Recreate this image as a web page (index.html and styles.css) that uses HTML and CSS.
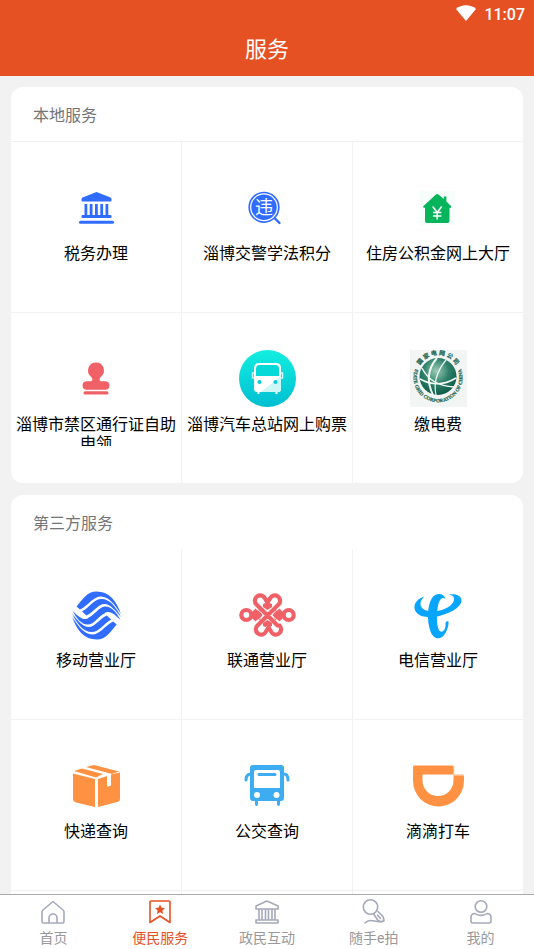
FILE: index.html
```html
<!DOCTYPE html>
<html lang="zh-CN">
<head>
<meta charset="utf-8">
<meta name="viewport" content="width=device-width, initial-scale=1">
<title>服务</title>
<link rel="stylesheet" href="styles.css">
</head>
<body>
<header class="top">
  <div class="status">
    <svg class="wifi" viewBox="0 0 20 16" aria-hidden="true"><path d="M0 4C5-1 15-1 20 4L10 16Z" fill="#fff"/></svg>
    <time>11:07</time>
  </div>
  <h1>服务</h1>
</header>

<main class="content">
  <section class="card">
    <h2 class="card-title ruled">本地服务</h2>
    <div class="grid">
      <a class="cell" href="#">
        <svg class="icon" viewBox="0 0 57 57" aria-hidden="true" fill="#306cff"><path d="M28.500 13 42.500 18.500q1 .5 1 2v1q0 1-1 1h-28q-1 0-1-1v-1q0-1.500 1-2Z"/><path d="M16.500 25h2.800v11h-2.800Zm5.200 0h2.800v11h-2.800Zm5.300 0h2.800v11H27Zm5.300 0h2.800v11h-2.800Zm5.200 0h2.800v11h-2.800Z"/><rect x="13.500" y="36" width="30" height="3" rx="1"/><rect x="11" y="41.800" width="35" height="3" rx="1.500"/></svg>
        <span class="label">税务办理</span>
      </a>
      <a class="cell" href="#">
        <svg class="icon" viewBox="0 0 57 57" aria-hidden="true"><circle cx="25" cy="28.300" r="14.800" fill="none" stroke="#306cff" stroke-width="1.700"/><circle cx="25" cy="28.300" r="12.700" fill="#306cff"/><path d="m36 39.500 4.500 4.500" stroke="#306cff" stroke-width="2.400" stroke-linecap="round"/><text class="seal" x="25" y="35" text-anchor="middle">违</text></svg>
        <span class="label">淄博交警学法积分</span>
      </a>
      <a class="cell" href="#">
        <svg class="icon" viewBox="0 0 57 57" aria-hidden="true"><path fill="#f7fdfa" d="M10 12h35v34H10z"/><path d="M25.900 15.500q1.300-1.200 2.600 0l5.300 4.500v-2.500h2.600v5L41 27q1 1.800-1 1.800h-.5V42q0 2-2 2H17q-2 0-2-2V28.800h-.5q-2 0-1-1.800Z" fill="#06b45c"/><path d="m22.700 27.500 4.500 6 4.500-6M27.200 33v7.500M23 33.500h8.400M23 37h8.400" fill="none" stroke="#fff" stroke-width="1.600"/></svg>
        <span class="label">住房公积金网上大厅</span>
      </a>
      <a class="cell" href="#">
        <svg class="icon" viewBox="0 0 57 57" aria-hidden="true" fill="#ef6067"><path d="M28 12.500a8 8 0 0 1 5 14.200c-2 1.800-2 4.600 1 4.600H37.800a4.300 4.300 0 0 1 0 8.500H18.200a4.300 4.300 0 0 1 0-8.500H22c3 0 3-2.800 1-4.600A8 8 0 0 1 28 12.500Z"/><rect x="15.500" y="41.200" width="25" height="3.300" rx="1.500"/></svg>
        <span class="label">淄博市禁区通行证自助申领</span>
      </a>
      <a class="cell" href="#">
        <svg class="icon" viewBox="0 0 57 57" aria-hidden="true"><defs><linearGradient id="teal" x2="0" y2="1"><stop stop-color="#13eee0"/><stop offset="1" stop-color="#00bed2"/></linearGradient></defs><circle cx="28.500" cy="28.500" r="28.500" fill="url(#teal)"/><path d="M15 23h-1.500v5H15m27-5h1.500v5H42" fill="none" stroke="#c9fbf8" stroke-width="1.500"/><path d="M20 13h17q5 0 5 5v21q0 3-3 3h-.5v2h-2v-2h-16v2h-2v-2H18q-3 0-3-3V18q0-5 5-5Z" fill="#fff"/><path d="M42 26v13q0 3-3 3H22Z" fill="#cdf6f6"/><path d="M20.500 15h16q3.500 0 3.500 4v7H17v-7q0-4 3.500-4Z" fill="#06d9d8"/><circle cx="20.500" cy="32" r="2" fill="#05cbd5"/><circle cx="36.500" cy="32" r="2" fill="#05cbd5"/></svg>
        <span class="label">淄博汽车总站网上购票</span>
      </a>
      <a class="cell" href="#">
        <svg class="icon" viewBox="0 0 57 57" aria-hidden="true"><defs><radialGradient id="globe" cx=".45" cy=".35" r=".7"><stop stop-color="#9bcbb8"/><stop offset=".5" stop-color="#2d8069"/><stop offset="1" stop-color="#075743"/></radialGradient><path id="arc-top" d="M9 17A21 21 0 0 1 47 17"/><path id="arc-bottom" d="M5.500 18A24.500 24.500 0 1 0 50.500 18"/></defs><path fill="#f3f4f4" d="M0 0h57v57H0z"/><circle cx="28" cy="26.500" r="18.500" fill="url(#globe)"/><g fill="none" stroke="#f3faf6"><path d="M10 29q18 10 36-1" stroke-width="1.500"/><path d="M12 18q9 18 32 19" stroke-width="1.400"/><path d="M27 8q-14 16-4 37" stroke-width="2"/><path d="M36 10Q22 27 26 45" stroke-width="1.200"/></g><text class="ring ring-cn"><textPath href="#arc-top" startOffset="50%" text-anchor="middle">国 家 电 网 公 司</textPath></text><text class="ring ring-en"><textPath href="#arc-bottom" startOffset="50%" text-anchor="middle">STATE GRID CORPORATION OF CHINA</textPath></text></svg>
        <span class="label">缴电费</span>
      </a>
    </div>
  </section>

  <section class="card">
    <h2 class="card-title">第三方服务</h2>
    <div class="grid">
      <a class="cell" href="#">
        <svg class="icon" viewBox="0 0 57 57" aria-hidden="true" fill="#306cff"><g id="waves"><path d="M8.500 20.500C15 13 19 5.500 28.500 5.500 41 5.500 48 14 53 28 47 19 41 10.500 33 10.500 25 10.500 21 19 12 23.500Z"/><path d="M14 25.500C22 21 26 13 33.500 13 42 13 48 21 53 31 47 24 42 18 36.500 18 30 18 26 26 18.500 29.500Z"/><path d="M20 32C27 29 31 20.500 37.500 20.500 44 20.500 49 27 52.500 34 47 28.500 43 25.500 39.500 26 34 27 31 32 25 35Z"/></g><use href="#waves" transform="rotate(180 28.600 29.500)"/></svg>
        <span class="label">移动营业厅</span>
      </a>
      <a class="cell" href="#">
        <svg class="icon" viewBox="0 0 57 57" aria-hidden="true"><g fill="none" stroke="#ef6067" stroke-width="4.200"><path d="M38.500 39.500 17.500 18.500a5.300 5.300 0 1 1 8.500-6l2.500 4 2.500-4a5.300 5.300 0 1 1 8.500 6l-21 21a5.300 5.300 0 1 0 8.500 6l2.500-4 2.500 4a5.300 5.300 0 1 0 8.500-6Z"/><circle cx="7.300" cy="29" r="5"/><circle cx="49.700" cy="29" r="5"/></g><path d="m24 18 2.500-1 2 1.500 2-1.500 2.500 1v3l-4.500 3-4.500-3Zm0 22 2.500 1 2-1.500 2 1.500 2.500-1v-3l-4.500-3-4.500 3ZM12 27l4.500-4.500 2 2 2-1 3 5.500-3 5.500-2-1-2 2L12 31Zm33 0-4.500-4.500-2 2-2-1-3 5.500 3 5.500 2-1 2 2L45 31Z" fill="#ef6067"/><path d="m17.500 22.500 6 5.500m-6 7.500 6-5.500m16-7.500-6 5.500m6 7.500-6-5.500" stroke="#fff" stroke-width=".8"/></svg>
        <span class="label">联通营业厅</span>
      </a>
      <a class="cell" href="#">
        <svg class="icon" viewBox="0 0 57 57" aria-hidden="true" fill="#08a5ff"><path d="M14 10.500C6 13 2 20 6 26c4 6 16 6 25 3.500C43 26 52 20 51.500 14 51 9 45 7.500 38.500 8.500c4 .5 6 2 5.500 5.500-1 6-11 11-20 11.500-7 .3-13-2-13.500-7-.2-3 1.500-5.500 3.500-8Z"/><path d="M35.500 13C34 7 26 6 22 12c-5 8-5 22-2 32 3 10 11 11 15.500 3 2-4 3.500-8 3-11.500-2-.5-3 .5-3 2 .5 5-2 9-5 8-4-2-4.500-18-2-28 1.500-5 4-7 7-4.500Z"/></svg>
        <span class="label">电信营业厅</span>
      </a>
      <a class="cell" href="#">
        <svg class="icon" viewBox="0 0 57 57" aria-hidden="true" fill="#ff9142"><path d="m6 14 8-2.500 21 5.500-7 3.500Z M18 10l8-2 25 6.500-7 2.500Z"/><path d="M5 16.500 27 22v28L8 45.500q-3-1-3-3Z M30 22l9-3v11l4-1.500V17.500l9-2V42q0 2-2 2.800L30 50Z"/></svg>
        <span class="label">快递查询</span>
      </a>
      <a class="cell" href="#">
        <svg class="icon" viewBox="0 0 57 57" aria-hidden="true" fill="#3eacf1"><path fill-rule="evenodd" d="M14 8h28q3 0 3 3v30q0 3-3 3h-1v3q0 2-1.500 2T38 47v-3H19v3q0 2-1.500 2T16 47v-3h-2q-3 0-3-3V11q0-3 3-3Zm3 5q-2 0-2 2v16h26V15q0-2-2-2Z"/><path d="M20 17.500h16" stroke="#3eacf1" stroke-width="3" stroke-linecap="round"/><path d="M12 17q-5 0-5 6m38-6q4 0 4 6" fill="none" stroke="#3eacf1" stroke-width="3" stroke-linecap="round"/><circle cx="18" cy="38" r="3" fill="#fff"/><circle cx="37.500" cy="38" r="3" fill="#fff"/></svg>
        <span class="label">公交查询</span>
      </a>
      <a class="cell" href="#">
        <svg class="icon" viewBox="0 0 57 57" aria-hidden="true"><path fill-rule="evenodd" d="M4 8.500h38q2 0 2 2v7h8q2 0 2 2v4a25.500 26 0 0 1-51 0v-13q0-2 1-2Zm8.500 9v6a15.500 15.500 0 0 0 31 0v-6Z" fill="#ff9142"/><path d="M44 8.500v9.500h10" fill="none" stroke="#ffe1cc"/></svg>
        <span class="label">滴滴打车</span>
      </a>
      <div class="cell"></div>
      <div class="cell"></div>
      <div class="cell"></div>
    </div>
  </section>
</main>

<nav class="tabs">
  <a class="tab" href="#"><svg viewBox="0 0 26 26" aria-hidden="true"><path d="M13 2.500 23 11q1 1 1 2v9.500q0 1.500-1.500 1.500h-19Q2 24 2 22.500V13q0-1 1-2ZM9 24v-5a4 4 0 0 1 8 0v5"/></svg><span>首页</span></a>
  <a class="tab active" href="#" aria-current="page"><svg viewBox="0 0 26 26" aria-hidden="true"><path d="M4 2h18q1 0 1 1v20.500L13 17 3 23.500V3q0-1 1-1Z"/><path class="solid" d="m13 5.500 1.500 3.200 3.500.4-2.600 2.400.7 3.500-3.100-1.800L9.900 15l.7-3.500L8 9.100l3.500-.4Z"/></svg><span>便民服务</span></a>
  <a class="tab" href="#"><svg viewBox="0 0 26 26" aria-hidden="true"><path d="m13 2 11 5v3H2V7Zm-8 8v11m3-11v11m3.500-11v11m3-11v11m3.500-11v11m3-11v11M2 21h22v3H2Z"/></svg><span>政民互动</span></a>
  <a class="tab" href="#"><svg viewBox="0 0 26 26" aria-hidden="true"><circle cx="9.500" cy="8" r="7.200"/><path d="m13 15.500 4 6 3.500 1.500 2.500-2-1-3.500-5-5M16.500 16l3 3.500M4 24c7-6 10 1 19-2l-.5-2"/></svg><span>随手e拍</span></a>
  <a class="tab" href="#"><svg viewBox="0 0 26 26" aria-hidden="true"><circle cx="13" cy="7.500" r="5.800"/><path d="M7 14.500c3 2.500 9 2.500 12 0 3 0 4 2 4 4V22q0 2-2 2H5q-2 0-2-2v-3.500q0-4 4-4Z"/></svg><span>我的</span></a>
</nav>
</body>
</html>
```

FILE: styles.css
```css
* {
  box-sizing: border-box;
}

body {
  margin: 0;
  height: 100vh;
  display: flex;
  flex-direction: column;
  background: #f2f2f2;
  color: #000;
  font-family: Roboto, "Noto Sans CJK SC", sans-serif;
}

a {
  color: inherit;
  text-decoration: none;
}

.top {
  flex: none;
  background: #e65124;
  color: #fff;
}

.status {
  display: flex;
  align-items: center;
  justify-content: flex-end;
  gap: 8px;
  height: 28px;
  padding-right: 9px;
  font-size: 16px;
  font-weight: 500;
}

.wifi {
  width: 20px;
  height: 16px;
  margin-bottom: 2px;
}

.top h1 {
  margin: 0;
  height: 48px;
  font-size: 22px;
  font-weight: 400;
  line-height: 44px;
  text-align: center;
}

.content {
  flex: 1;
  min-height: 0;
  padding: 11px;
  overflow-y: auto;
  scrollbar-width: none;
}

.card {
  margin-bottom: 12px;
  border-radius: 12px;
  background: #fff;
  overflow: hidden;
}

.card-title {
  margin: 0;
  padding: 4px 22px 0;
  color: #737477;
  font-size: 16px;
  font-weight: 400;
  line-height: 50px;
}

.ruled {
  border-bottom: 1px solid #f0f0f0;
}

.grid {
  display: grid;
  grid-template-columns: repeat(3, 1fr);
  grid-auto-rows: 170px;
  gap: 1px;
  background: #f2f2f2;
}

.cell {
  display: flex;
  flex-direction: column;
  align-items: center;
  gap: 8px;
  padding: 37px 5px 0;
  background: #fff;
}

.icon {
  flex: none;
  width: 57px;
  height: 57px;
}

.label {
  max-height: 31px;
  overflow: hidden;
  font-size: 16px;
  line-height: 19px;
  text-align: center;
}

.seal {
  fill: #fff;
  font-size: 18px;
}

.ring {
  fill: #176650;
  stroke: #176650;
  stroke-width: 0.2;
  font-weight: 700;
}

.ring-cn {
  font-size: 6px;
}

.ring-en {
  font-family: "Liberation Serif", serif;
  font-size: 5px;
}

.tabs {
  flex: none;
  display: flex;
  height: 55px;
  border-top: 1px solid #aaa;
  background: #fff;
}

.tab {
  flex: 1;
  display: flex;
  flex-direction: column;
  align-items: center;
  gap: 3px;
  padding-top: 4px;
  color: #999;
  font-size: 14px;
  line-height: 20px;
}

.tab svg {
  width: 26px;
  height: 26px;
  fill: none;
  stroke: #a5a9ba;
  stroke-width: 1.6;
  stroke-linejoin: round;
  stroke-linecap: round;
}

.active {
  color: #e65124;
}

.active svg {
  stroke: #e65124;
}

.active .solid {
  fill: #e65124;
  stroke: none;
}
```
